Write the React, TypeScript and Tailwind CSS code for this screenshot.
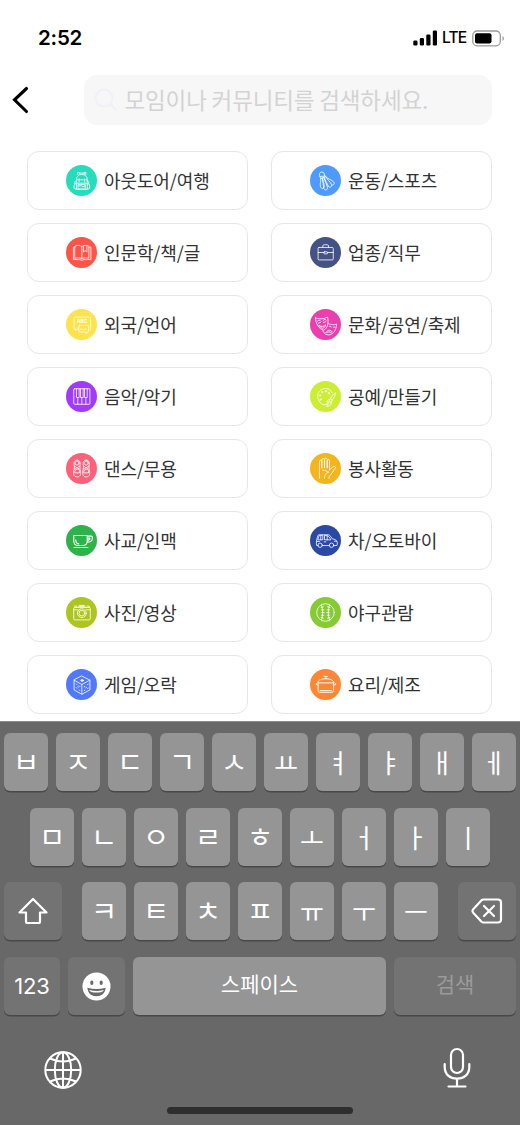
import type { ReactNode } from "react";
import clsx from "clsx";

interface Category {
  label: string;
  color: string;
  icon: ReactNode;
}

// Icons are drawn on a 92x92 grid that covers the whole colored circle
const categories: Category[] = [
  {
    label: "아웃도어/여행",
    color: "bg-[#26dcbc]",
    icon: (
      <>
        <path d="M35 28v-6h5v5M54 27v-5h5v6M40 24h14" />
        <path d="M31 71V43c0-10 7-15 16-15s16 5 16 15v28z" />
        <path d="M31 46c-5 1-5 6-5 9h5M63 46c5 1 5 6 5 9h-5M31 56h-5c-3 4-3 15 0 15h5M63 56h5c3 4 3 15 0 15h-5" />
        <path d="M33 44h28M39 41v9M55 41v9M37 58h20v13H37zM37 62h10l3 3 7-3M31 54h32" />
      </>
    ),
  },
  {
    label: "운동/스포츠",
    color: "bg-[#4f9bfd]",
    icon: (
      <>
        <path d="M29 33c-4-7 1-12 6-12s10 4 8 11z" />
        <path d="M29 33l3 7 14-6-3-4M32 40c1 9-3 16-1 24 2 7 9 8 11 1 1-8-3-16-6-26" />
        <path d="M38 39c-1 12 2 19 3 31 4 7 12 4 11-3-2-10-8-18-11-30" />
        <path d="M43 36c2 11 7 18 12 28 5 4 11 0 9-6-4-9-13-14-18-24" />
        <path d="M46 34c7 7 15 9 23 15 5 4 3 11-4 11" />
      </>
    ),
  },
  {
    label: "인문학/책/글",
    color: "bg-[#fd5448]",
    icon: (
      <>
        <path d="M27 27c7-3 14-3 20 1 5-4 14-4 21-1v36c-8-2-15-2-21 1-7-3-13-3-20-1z" />
        <path d="M27 30h-5v37h19c2 0 3 2 6 2s4-2 6-2h21V30h-6M47 28v35M52 26v19l5-5 5 5V26" />
      </>
    ),
  },
  {
    label: "업종/직무",
    color: "bg-[#455286]",
    icon: (
      <>
        <rect x="24" y="31" width="45" height="37" rx="3" />
        <path d="M38 31v-5c0-2 2-3 4-3h9c2 0 4 1 4 3v5M24 46h17M52 46h17" />
        <rect x="41" y="44" width="11" height="6" rx="1.5" />
      </>
    ),
  },
  {
    label: "외국/언어",
    color: "bg-[#fee24e]",
    icon: (
      <>
        <path d="M37 59H34l-6 5v-5h-4V28c0-3 1-4 4-4h41c3 0 4 1 4 4v31c0 2-1 4-4 4" />
        <path d="M41 49h23c2 0 3 1 3 3v13c0 2-1 3-3 3h-2v5l-6-5H41c-2 0-3-1-3-3V52c0-2 1-3 3-3z" />
        <path d="M43 60h3M50 60h3M57 60h3" />
        <text
          x="48"
          y="43"
          textAnchor="middle"
          fontSize="15"
          fontWeight="700"
          fontFamily="Inter, sans-serif"
          fill="currentColor"
          stroke="none"
        >
          ABC
        </text>
      </>
    ),
  },
  {
    label: "문화/공연/축제",
    color: "bg-[#eb3faf]",
    icon: (
      <>
        <path d="M16 26c12 5 24 4 36-2 4 15 1 34-12 39-14-4-23-20-24-37z" />
        <path d="M22 36c4-4 8-3 10 0M39 34c3-4 7-4 9-1M25 42l6-2M40 40l6-2M27 49c6 4 13 4 20-2-2 7-6 10-10 10-4-1-8-4-10-8z" />
        <path d="M54 43c8 4 17 5 25 2-1 16-9 30-23 32-8 0-14-4-18-12M58 51l5 2M70 54l4 0M47 70c6-9 13-10 19-2M50 70c4-3 9-3 13 0" />
      </>
    ),
  },
  {
    label: "음악/악기",
    color: "bg-[#a13af9]",
    icon: (
      <>
        <rect x="23" y="23" width="48" height="46" rx="2" />
        <path d="M31 23v26h8V23M43 23v26h8V23M55 23v26h8V23M35 49v20M47 49v20M59 49v20" />
      </>
    ),
  },
  {
    label: "공예/만들기",
    color: "bg-[#ccee31]",
    icon: (
      <>
        <path d="M66 36c-5-12-18-17-29-12-14 6-17 20-12 31 4 11 14 18 23 15 6-3 1-8 4-12 3-4 8-3 10-9" />
        <circle cx="47" cy="30" r="2.2" />
        <circle cx="36" cy="33" r="2.2" />
        <circle cx="30" cy="43" r="2.2" />
        <circle cx="32" cy="55" r="2.2" />
        <circle cx="56" cy="36" r="2.2" />
        <path d="M75 36c-6 3-11 10-14 17l5 3c6-7 9-13 9-20zM61 54l5 3-3 7-6-3zM57 62c-6 4-1 9-8 13 10 0 15-4 14-10" />
      </>
    ),
  },
  {
    label: "댄스/무용",
    color: "bg-[#fd6079]",
    icon: (
      <>
        <path d="M33 21c7 0 10 6 9 13-1 6-1 8 0 15 3 12 2 22-9 22s-12-10-9-22c1-7 1-9 0-15-1-7 2-13 9-13zM60 21c7 0 10 6 9 13-1 6-1 8 0 15 3 12 2 22-9 22s-12-10-9-22c1-7 1-9 0-15-1-7 2-13 9-13z" />
        <ellipse cx="33" cy="30" rx="6" ry="6" />
        <ellipse cx="60" cy="30" rx="6" ry="6" />
        <path d="M25 39l15 9M41 39l-15 9M52 39l15 9M68 39l-15 9M27 52c4-5 9-5 13 0v7H27zM54 52c4-5 9-5 13 0v7H54z" />
      </>
    ),
  },
  {
    label: "봉사활동",
    color: "bg-[#f4b51c]",
    icon: (
      <>
        <path d="M28 75V25c0-5 7-5 7 0v20M35 43V20c0-5 8-5 8 0v24M43 43V19c0-5 8-5 8 0v25M51 43V23c0-5 7-5 7 0v27" />
        <path d="M58 50l10-9c4-3 10 0 7 4L61 65c-3 4-5 6-5 10M38 51c8-1 11 4 17 6M54 57c-8 3-11 9-11 18" />
      </>
    ),
  },
  {
    label: "사교/인맥",
    color: "bg-[#2eb34b]",
    icon: (
      <g strokeWidth="3.2">
        <path d="M23 31h40v15c0 10-6 15-13 15H36c-8 0-13-6-13-15zM63 33h11c5 0 5 4 4 8-1 7-7 10-15 10M63 39h8c0 4-3 6-8 6M24 67h41" />
        <path d="M29 44c0 8 3 12 9 12" />
      </g>
    ),
  },
  {
    label: "차/오토바이",
    color: "bg-[#2949a3]",
    icon: (
      <>
        <path d="M24 61h-4c-2-7-1-15 2-25 1-5 2-7 6-7h26c4 0 6 3 12 12 8 1 12 4 14 8 2 5 1 9 0 12h-9M37 61h20" />
        <circle cx="30" cy="60" r="6.5" />
        <circle cx="64" cy="60" r="6.5" />
        <path d="M27 32l-4 12h15V32zM43 32v12h19c-4-7-7-12-10-12zM32 32v12M51 32v12M21 49h7M72 48h7M42 50h5" />
      </>
    ),
  },
  {
    label: "사진/영상",
    color: "bg-[#aec420]",
    icon: (
      <>
        <rect x="23" y="31" width="49" height="37" rx="3" />
        <path d="M37 31l2-6h16l2 6M25 27h7v4M62 27h7v4M41 28h12M23 38h13M59 38h13" />
        <circle cx="47" cy="48" r="13" />
        <circle cx="47" cy="48" r="8.5" />
      </>
    ),
  },
  {
    label: "야구관람",
    color: "bg-[#85cb31]",
    icon: (
      <>
        <circle cx="46" cy="46" r="26" />
        <path d="M34 23c5 14 5 32 0 46M58 23c-5 14-5 32 0 46" />
        <path d="M33 31l7-2M34 38h7M35 46h7M34 54h7M33 61l7 2M59 31l-7-2M58 38h-7M57 46h-7M58 54h-7M59 61l-7 2" />
      </>
    ),
  },
  {
    label: "게임/오락",
    color: "bg-[#5079fd]",
    icon: (
      <>
        <path d="M47 21l24 12v29L47 75 24 62V33zM24 33l23 13 24-13M47 46v29" />
        <ellipse cx="48" cy="34" rx="4" ry="2.5" fill="currentColor" />
        <path d="M30 44l2 2M39 50l2 2M30 55l2 2M39 62l2 2M35 53l2 1M54 53l2-1M64 46l2-1M54 64l2-1M64 58l2-1M59 56l2-1" />
      </>
    ),
  },
  {
    label: "요리/제조",
    color: "bg-[#fd8735]",
    icon: (
      <g strokeWidth="2.8">
        <path d="M23 40c2-9 14-11 24-11s22 2 24 11zM42 22h10M47 22v6" />
        <path d="M24 41v23c0 4 2 5 5 5h36c3 0 5-1 5-5V41M24 47h-5v-4M70 47h6v-4M30 64h34" />
      </g>
    ),
  },
];

const rowOne = ["ㅂ", "ㅈ", "ㄷ", "ㄱ", "ㅅ", "ㅛ", "ㅕ", "ㅑ", "ㅐ", "ㅔ"];
const rowTwo = ["ㅁ", "ㄴ", "ㅇ", "ㄹ", "ㅎ", "ㅗ", "ㅓ", "ㅏ", "ㅣ"];
const rowThree = ["ㅋ", "ㅌ", "ㅊ", "ㅍ", "ㅠ", "ㅜ", "ㅡ"];

const keyBase =
  "h-[58px] flex shrink-0 items-center justify-center rounded-[6px] shadow-[0_1.5px_0_#484848] text-white";

function StatusBar() {
  return (
    <div className="flex h-[75px] items-start justify-between pl-[38px] pr-[15px] pt-[26px]">
      <span className="font-[Inter] text-[20.5px] font-semibold leading-6 tracking-[-0.2px] text-black">2:52</span>
      <div className="flex h-6 items-center">
        <svg width="25" height="16" viewBox="0 0 25 16" fill="#000">
          <rect x="0.3" y="10.5" width="4.2" height="5" rx="1.2" />
          <rect x="6.8" y="8" width="4.2" height="7.5" rx="1.2" />
          <rect x="13.3" y="4.5" width="4.2" height="11" rx="1.2" />
          <rect x="19.8" y="0.5" width="4.2" height="15" rx="1.2" />
        </svg>
        <span className="ml-[4px] w-[26px] font-[Inter] text-[15.5px] font-medium leading-6 tracking-[-0.8px] text-black">
          LTE
        </span>
        <svg className="ml-[4px]" width="33" height="17" viewBox="0 0 33 17">
          <rect x="0.8" y="1" width="27.5" height="14.8" rx="4.4" fill="none" stroke="#9b9b9b" strokeWidth="1.3" />
          <rect x="3" y="3.2" width="16.5" height="10.4" rx="2" fill="#000" />
          <path d="M30.5 6v5c1.8-.8 1.8-4.2 0-5z" fill="#9b9b9b" />
        </svg>
      </div>
    </div>
  );
}

function SearchHeader() {
  return (
    <div className="flex h-[50px] items-center pl-[12px] pr-[28px]">
      <svg width="17" height="28" viewBox="0 0 17 28" fill="none" stroke="#000" strokeWidth="3.1" strokeLinecap="round">
        <path d="M14.5 2.5L2.5 13.8L14.5 25.5" />
      </svg>
      <div className="ml-auto flex h-[50px] w-[408.5px] items-center rounded-[13px] bg-[#f7f7f7] pl-[10px]">
        <svg width="24" height="24" viewBox="0 0 24 24" fill="none" stroke="#f0f0f8" strokeWidth="2.2" strokeLinecap="round">
          <circle cx="10" cy="10" r="8.5" />
          <path d="M16.5 16.5L22 22" />
        </svg>
        <span className="ml-[7px] whitespace-nowrap text-[22.5px] tracking-[-0.15px] text-[#d3d3d3]">
          모임이나 커뮤니티를 검색하세요.
        </span>
      </div>
    </div>
  );
}

function CategoryCard({ label, color, icon }: Category) {
  return (
    <div className="flex h-[59px] items-center rounded-[12px] border border-[#e6e6e6] bg-white pl-[38px]">
      <span className={clsx("size-[31px] shrink-0 rounded-full", color)}>
        <svg
          className="size-[31px] text-white"
          viewBox="0 0 92 92"
          fill="none"
          stroke="currentColor"
          strokeWidth="2.4"
          strokeLinecap="round"
          strokeLinejoin="round"
        >
          {icon}
        </svg>
      </span>
      <span className="ml-[7px] whitespace-nowrap pb-[2px] text-[18px] leading-7 tracking-[-0.12px] text-[#333]">
        {label}
      </span>
    </div>
  );
}

function LetterKey({ char }: { char: string }) {
  // Jamo vowels start at ㅏ
  const isVowel = char >= "ㅏ";

  return (
    <div className={clsx(keyBase, "w-[44px] bg-[#959595] pb-[2px]", isVowel ? "text-[26px]" : "text-[28.5px]")}>
      {char}
    </div>
  );
}

function Keyboard() {
  return (
    <div className="h-[404px] border-t border-[#8d8d8d] bg-[#686868] px-[4px] pt-[11px]">
      <div className="flex justify-between">
        {rowOne.map((char) => (
          <LetterKey key={char} char={char} />
        ))}
      </div>

      <div className="mt-[17px] flex justify-between px-[26px]">
        {rowTwo.map((char) => (
          <LetterKey key={char} char={char} />
        ))}
      </div>

      <div className="mt-[16px] flex justify-between">
        <div className={clsx(keyBase, "w-[58px] bg-[#737373]")}>
          <svg width="32" height="28" viewBox="0 0 32 28" fill="none" stroke="#fff" strokeWidth="2.2" strokeLinejoin="round">
            <path d="M16 2L29.5 15.5H23V24.5Q23 26 21.5 26H10.5Q9 26 9 24.5V15.5H2.5Z" />
          </svg>
        </div>
        <div className="flex gap-[8px]">
          {rowThree.map((char) => (
            <LetterKey key={char} char={char} />
          ))}
        </div>
        <div className={clsx(keyBase, "w-[58px] bg-[#737373]")}>
          <svg
            width="32"
            height="28"
            viewBox="0 0 32 28"
            fill="none"
            stroke="#fff"
            strokeWidth="2.2"
            strokeLinejoin="round"
            strokeLinecap="round"
          >
            <path d="M12.5 2.5H27Q30 2.5 30 5.5V22.5Q30 25.5 27 25.5H12.5Q11.3 25.5 10.3 24.5L2 15.5Q1 14 2 12.5L10.3 3.5Q11.3 2.5 12.5 2.5Z" />
            <path d="M13 9L23 19M23 9L13 19" />
          </svg>
        </div>
      </div>

      <div className="mt-[17px] flex justify-between">
        <div className={clsx(keyBase, "w-[56px] bg-[#737373] font-[Inter] text-[22px] tracking-[-0.2px]")}>123</div>
        <div className={clsx(keyBase, "w-[57px] bg-[#737373]")}>
          <svg width="29" height="29" viewBox="0 0 29 29">
            <circle cx="14.5" cy="14.5" r="14" fill="#fff" />
            <ellipse cx="9.8" cy="10.8" rx="1.6" ry="2.2" fill="#6a6a6a" />
            <ellipse cx="19.2" cy="10.8" rx="1.6" ry="2.2" fill="#6a6a6a" />
            <path d="M5.3 15.8Q14.5 18.2 23.7 15.8C23 21.5 19.5 24.3 14.5 24.3S6 21.5 5.3 15.8Z" fill="#6a6a6a" />
            <path d="M7.2 18Q14.5 19.8 21.8 18Q20.8 20.6 14.5 20.6T7.2 18Z" fill="#fff" />
          </svg>
        </div>
        <div className={clsx(keyBase, "w-[253px] bg-[#959595] pb-[4px] text-[21px]")}>스페이스</div>
        <div className={clsx(keyBase, "w-[122px] bg-[#737373] pb-[4px]")}>
          <span className="text-[21px] text-[#9b9b9b]">검색</span>
        </div>
      </div>

      <div className="mt-[32px] flex items-start justify-between pl-[39px] pr-[45px]">
        <svg className="mt-[3px]" width="40" height="40" viewBox="0 0 40 40" fill="none" stroke="#fff" strokeWidth="2">
          <circle cx="20" cy="20" r="17.7" />
          <ellipse cx="20" cy="20" rx="8.2" ry="17.7" />
          <path d="M20 2.3V37.7M2.3 20H37.7M7 8.5Q20 14.5 33 8.5M7 31.5Q20 25.5 33 31.5" />
        </svg>
        <svg width="28" height="42" viewBox="0 0 28 42" fill="none" stroke="#fff" strokeWidth="2.2" strokeLinecap="round">
          <rect x="8" y="2" width="12" height="24" rx="6" />
          <path d="M1.7 17V20C1.7 27.5 7 31.7 14 31.7S26.3 27.5 26.3 20V17M14 32V39.5M5.5 39.5H22.5" />
        </svg>
      </div>

      <div className="mx-auto mt-[17px] h-[7px] w-[186px] rounded-full bg-[#2e2e2e]" />
    </div>
  );
}

export default function App() {
  return (
    <div className="flex h-[1125px] w-[520px] flex-col overflow-hidden bg-white font-['Noto_Sans_CJK_KR',sans-serif]">
      <StatusBar />
      <SearchHeader />
      <div className="grid flex-1 grid-cols-2 content-start gap-x-[23px] gap-y-[13px] pl-[27px] pr-[28px] pt-[26px]">
        {categories.map((category) => (
          <CategoryCard key={category.label} {...category} />
        ))}
      </div>
      <Keyboard />
    </div>
  );
}
